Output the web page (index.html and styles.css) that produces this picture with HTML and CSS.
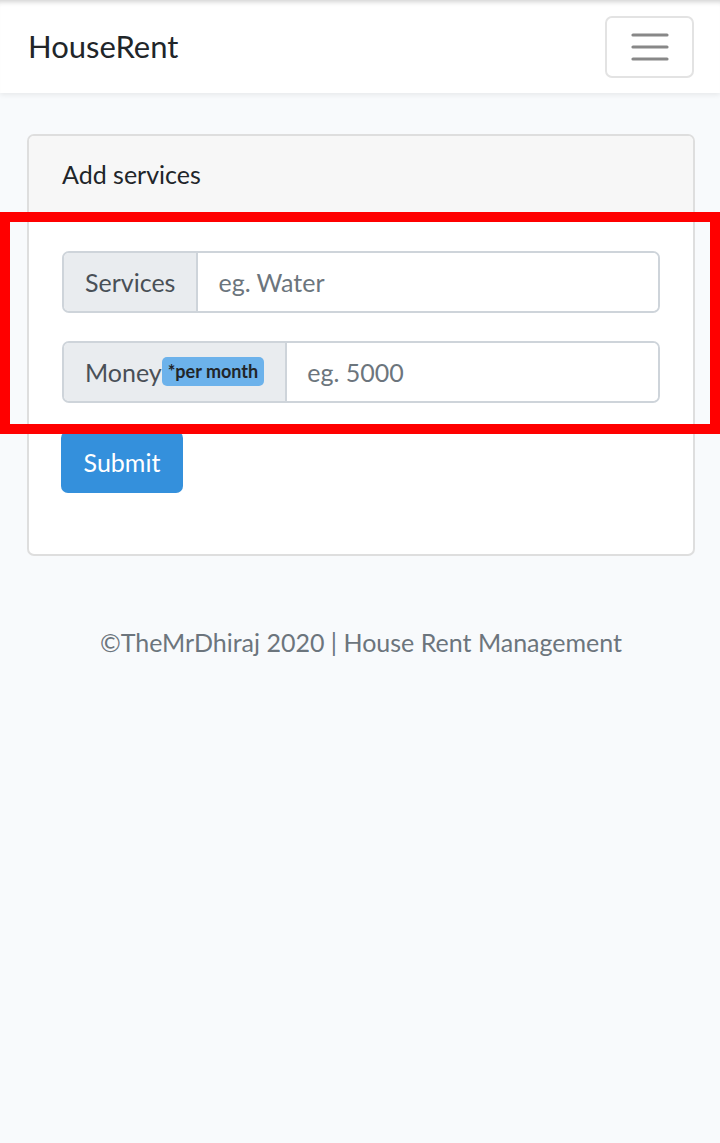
FILE: index.html
```html
<!DOCTYPE html>
<html lang="en">
<head>
<meta charset="utf-8">
<title>HouseRent</title>
<link rel="stylesheet" href="styles.css">
</head>
<body>
<nav class="navbar">
  <a class="brand" href="#">HouseRent</a>
  <button class="toggler" aria-label="Toggle navigation">
    <svg width="38" height="28" viewBox="0 0 38 28"><g stroke="#888" stroke-width="3.2" stroke-linecap="round"><line x1="2" y1="2" x2="36" y2="2"/><line x1="2" y1="14" x2="36" y2="14"/><line x1="2" y1="26" x2="36" y2="26"/></g></svg>
  </button>
</nav>
<main class="container">
  <section class="card">
    <header class="card-header">Add services</header>
    <form class="card-body">
      <div class="input-group">
        <span class="addon">Services</span>
        <input class="field" type="text" placeholder="eg. Water">
      </div>
      <div class="input-group">
        <span class="addon">Money<span class="badge">*per month</span></span>
        <input class="field" type="text" placeholder="eg. 5000">
      </div>
      <button class="btn" type="button">Submit</button>
    </form>
  </section>
  <footer class="footer">©TheMrDhiraj 2020 | House Rent Management</footer>
</main>
<div class="highlight"></div>
</body>
</html>
```
FILE: styles.css
```css
* { box-sizing: border-box; }
html, body { margin: 0; }
body {
  background: #f8fafc;
  font-family: "Lato", "Noto Sans", sans-serif;
  color: #212529;
  font-size: 25px;
  min-height: 1143px;
  position: relative;
}
.navbar {
  height: 93px;
  background: #fff;
  display: flex;
  align-items: center;
  justify-content: space-between;
  padding: 0 26px 0 28px;
  box-shadow: inset 0 6px 5px -4px rgba(0,0,0,.18), 0 2px 5px rgba(0,0,0,.07);
}
.brand {
  color: #212529;
  text-decoration: none;
  font-size: 31px;
  padding-bottom: 2px;
}
.toggler {
  width: 89px;
  height: 62px;
  margin-top: 1px;
  background: transparent;
  border: 2px solid #e3e3e3;
  border-radius: 7px;
  display: flex;
  align-items: center;
  justify-content: center;
  padding: 0;
}
.container {
  padding: 41px 25px 0 27px;
}
.card {
  background: #fff;
  border: 2px solid #dedede;
  border-radius: 7px;
  overflow: hidden;
}
.card-header {
  background: #f7f7f7;
  height: 78px;
  display: flex;
  align-items: center;
  padding: 0 33px;
  border-bottom: 2px solid #dedede;
  font-size: 25px;
}
.card-body {
  padding: 37px 33px 61px;
  display: flex;
  flex-direction: column;
  align-items: flex-start;
}
.input-group {
  display: flex;
  width: 598px;
  height: 62px;
  border: 2px solid #ced4da;
  border-radius: 7px;
  overflow: hidden;
  margin-bottom: 28px;
}
.addon {
  background: #e9ecef;
  color: #495057;
  display: flex;
  align-items: center;
  padding: 0 21px;
  border-right: 2px solid #ced4da;
  font-size: 25px;
}
.badge {
  background: #6cb2eb;
  color: #212529;
  font-weight: 700;
  font-size: 18px;
  padding: 3px 6px 4px;
  border-radius: 5px;
  margin-top: -2px;
}
.field {
  flex: 1;
  min-width: 0;
  border: 0;
  outline: none;
  font: inherit;
  font-size: 25px;
  padding: 0 20px;
  color: #495057;
  background: #fff;
}
.field::placeholder { color: #6c757d; opacity: 1; }
.btn {
  width: 122px;
  height: 62px;
  margin-left: -1px;
  background: #3490dc;
  color: #fff;
  border: 0;
  border-radius: 7px;
  font: inherit;
  font-size: 25px;
  padding: 0;
}
.footer {
  text-align: center;
  color: #6c757d;
  font-size: 25px;
  padding-top: 71px;
}
.highlight {
  position: absolute;
  left: 0;
  top: 212px;
  width: 720px;
  height: 222px;
  border: 10px solid #ff0000;
  pointer-events: none;
}
```
